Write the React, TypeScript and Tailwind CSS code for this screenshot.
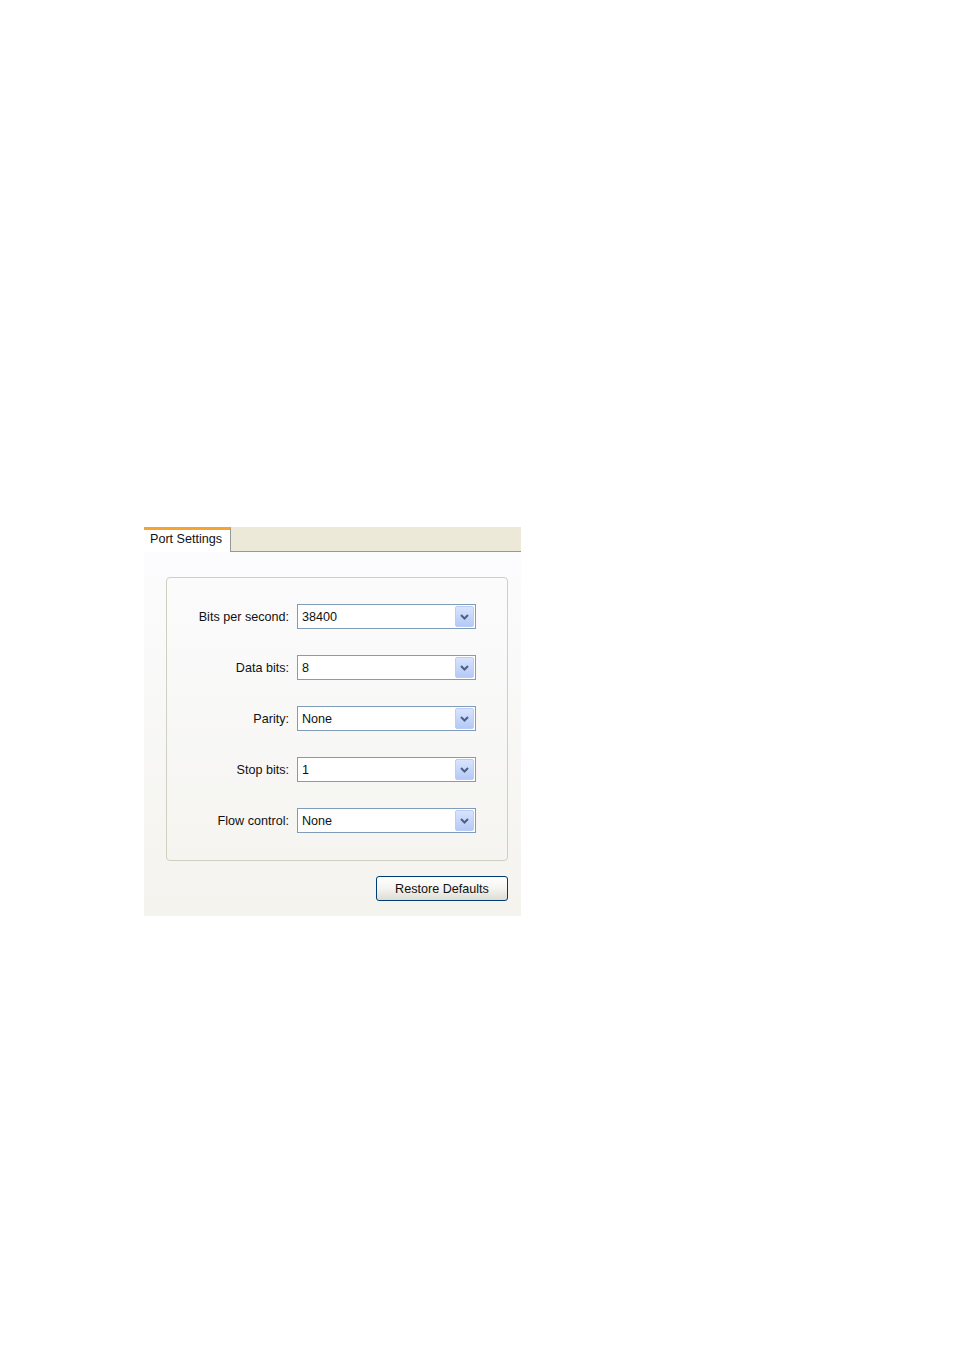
import React from 'react';

const rows = [
  { label: 'Bits per second:', value: '38400' },
  { label: 'Data bits:', value: '8' },
  { label: 'Parity:', value: 'None' },
  { label: 'Stop bits:', value: '1' },
  { label: 'Flow control:', value: 'None' },
];

const ComboBox: React.FC<{ value: string }> = ({ value }) => (
  <div className="w-[179px] h-[25px] border border-[#7f9db9] bg-white flex items-center">
    <span className="flex-1 pl-[4px] pt-[2px] leading-none">{value}</span>
    <div className="w-[19px] h-[21px] mr-[1px] rounded-[2px] border border-[#bccdf5] bg-gradient-to-b from-[#d8e4fe] to-[#b5c9f7] flex items-center justify-center">
      <svg width="9" height="6" viewBox="0 0 9 6">
        <path d="M1 1 L4.5 4.5 L8 1" fill="none" stroke="#4d6185" strokeWidth="2" />
      </svg>
    </div>
  </div>
);

const App: React.FC = () => {
  return (
    <div
      className="min-h-[1350px] bg-white pt-[527px] pl-[144px] text-[12.6px] text-[#111]"
      style={{ fontFamily: '"Liberation Sans", Arial, sans-serif' }}
    >
      <div className="w-[377px]">
        {/* tab strip */}
        <div className="flex h-[25px] bg-[#ece9d8]">
          <div className="w-[87px] h-[25px] bg-white border-t-[3px] border-[#f5a331] border-r border-r-[#919b9c] flex items-center pl-[6px] pb-[3px]">
            Port Settings
          </div>
          <div className="flex-1 border-b border-[#919b9c]" />
        </div>

        {/* page body */}
        <div className="h-[364px] bg-gradient-to-b from-[#fcfcfe] to-[#f4f3ee] pt-[25px] pl-[22px]">
          <div className="w-[342px] h-[284px] rounded-[4px] border border-[#d0d0bf] pt-[26px]">
            <div className="flex flex-col gap-[26px]">
              {rows.map((r) => (
                <div key={r.label} className="flex items-center">
                  <div className="w-[122px] text-right pt-[2px]">{r.label}</div>
                  <div className="ml-[8px]">
                    <ComboBox value={r.value} />
                  </div>
                </div>
              ))}
            </div>
          </div>
          <div className="w-[342px] flex justify-end mt-[15px]">
            <button className="w-[132px] h-[25px] pt-[2px] rounded-[3px] border border-[#003c74] bg-gradient-to-b from-[#ffffff] via-[#f4f4f0] to-[#dedcd2] text-[12.6px]">
              Restore Defaults
            </button>
          </div>
        </div>
      </div>
    </div>
  );
};

export default App;
